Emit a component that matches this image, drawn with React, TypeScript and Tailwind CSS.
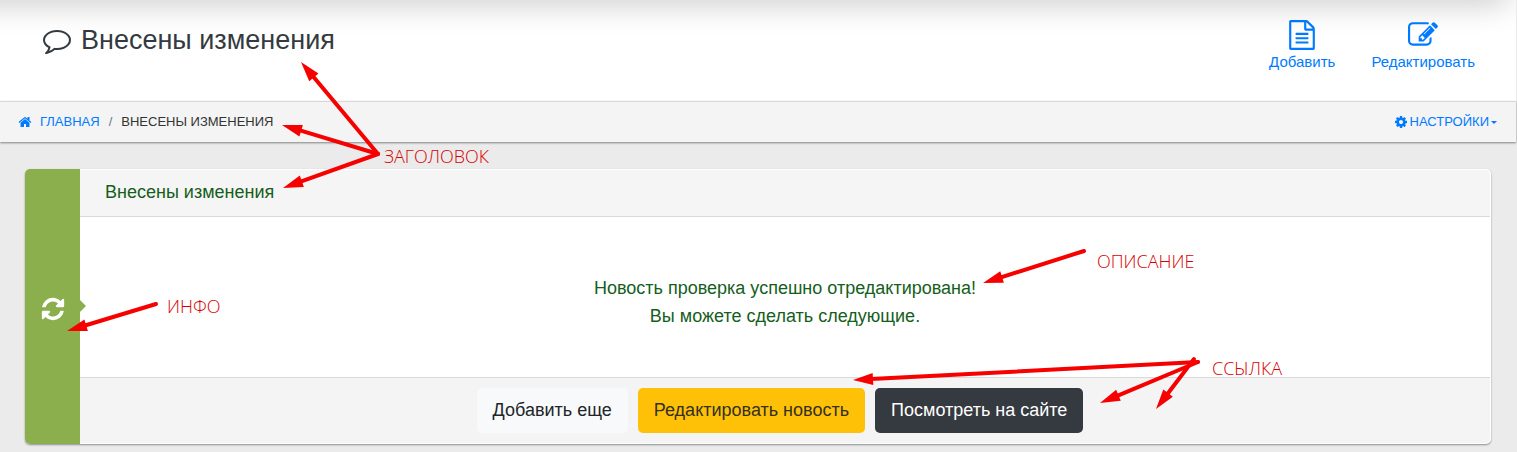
import type { ReactNode } from 'react';

const ICONS = {
  comment:
    'M896 384q-204 0-381.5 69.5t-282 187.5-104.5 255q0 112 71.5 213.5t201.5 175.5l87 50-27 96q-24 91-70 172 152-63 275-171l43-38 57 6q69 8 130 8 204 0 381.5-69.5t282-187.5 104.5-255-104.5-255-282-187.5-381.5-69.5zm896 512q0 174-120 321.5t-326 233-450 85.5q-70 0-145-8-198 175-460 242-49 14-114 22h-5q-15 0-27-10.5t-16-27.5v-1q-3-4-.5-12t2-10 4.5-9.5l6-9 7-8.5 8-9q7-8 31-34.5t34.5-38 31-39.5 32.5-51 27-59 26-76q-157-89-247.5-220t-90.5-281q0-130 71-248.5t191-204.5 286-136.5 348-50.5 348 50.5 286 136.5 191 204.5 71 248.5z',
  home: 'M1472 992v480q0 26-19 45t-45 19h-384v-384h-256v384h-384q-26 0-45-19t-19-45v-480q0-1 .5-3t.5-3l575-474 575 474q1 2 1 6zm223-69l-62 74q-8 9-21 11h-3q-13 0-21-7l-692-577-692 577q-12 8-24 7-13-2-21-11l-62-74q-8-10-7-23.5t11-21.5l719-599q32-26 76-26t76 26l244 204v-195q0-14 9-23t23-9h192q14 0 23 9t9 23v408l219 182q10 8 11 21.5t-7 23.5z',
  file: 'M1596 380q28 28 48 76t20 88v1152q0 40-28 68t-68 28h-1344q-40 0-68-28t-28-68v-1600q0-40 28-68t68-28h896q40 0 88 20t76 48zm-444-244v376h376q-10-29-22-41l-313-313q-12-12-41-22zm384 1528v-1024h-416q-40 0-68-28t-28-68v-416h-768v1536h1280zm-1024-864q0-14 9-23t23-9h704q14 0 23 9t9 23v64q0 14-9 23t-23 9h-704q-14 0-23-9t-9-23v-64zm736 224q14 0 23 9t9 23v64q0 14-9 23t-23 9h-704q-14 0-23-9t-9-23v-64q0-14 9-23t23-9h704zm0 256q14 0 23 9t9 23v64q0 14-9 23t-23 9h-704q-14 0-23-9t-9-23v-64q0-14 9-23t23-9h704z',
  edit: 'M888 1184l116-116-152-152-116 116v56h96v96h56zm440-720q-16-16-33 1l-350 350q-17 17-1 33t33-1l350-350q17-17 1-33zm80 594v190q0 119-84.5 203.5t-203.5 84.5h-832q-119 0-203.5-84.5t-84.5-203.5v-832q0-119 84.5-203.5t203.5-84.5h832q63 0 117 25 15 7 18 23 3 17-9 29l-49 49q-14 14-32 8-23-6-45-6h-832q-66 0-113 47t-47 113v832q0 66 47 113t113 47h832q66 0 113-47t47-113v-126q0-13 9-22l64-64q15-15 35-7t20 29zm-96-738l288 288-672 672h-288v-288zm444 132l-92 92-288-288 92-92q28-28 68-28t68 28l152 152q28 28 28 68t-28 68z',
  cog: 'M1152 896q0-106-75-181t-181-75-181 75-75 181 75 181 181 75 181-75 75-181zm512-109v222q0 12-8 23t-20 13l-185 28q-19 54-39 91 35 50 107 138 10 12 10 25t-9 23q-27 37-99 108t-94 71q-12 0-26-9l-138-108q-44 23-91 38-16 136-29 186-7 28-36 28h-222q-14 0-24.5-8.5t-11.5-21.5l-28-184q-49-16-90-37l-141 107q-10 9-25 9-14 0-25-11-126-114-165-168-7-10-7-23 0-12 8-23 15-21 51-66.5t54-70.5q-27-50-41-99l-183-27q-13-2-21-12.5t-8-23.5v-222q0-12 8-23t19-13l186-28q14-46 39-92-40-57-107-138-10-12-10-24 0-10 9-23 26-36 98.5-107.5t94.5-71.5q13 0 26 10l138 107q44-23 91-38 16-136 29-186 7-28 36-28h222q14 0 24.5 8.5t11.5 21.5l28 184q49 16 90 37l142-107q9-9 24-9 13 0 25 10 129 119 165 170 7 8 7 22 0 12-8 23-15 21-51 66.5t-54 70.5q26 50 41 98l183 28q13 2 21 12.5t8 23.5z',
  refresh:
    'M1639 1056q0 5-1 7-64 268-268 434.5t-478 166.5q-146 0-282.5-55t-243.5-157l-129 129q-19 19-45 19t-45-19-19-45v-448q0-26 19-45t45-19h448q26 0 45 19t19 45-19 45l-137 137q71 66 161 102t187 36q134 0 250-65t186-179q11-17 53-117 8-23 30-23h192q13 0 22.5 9.5t9.5 22.5zm25-800v448q0 26-19 45t-45 19h-448q-26 0-45-19t-19-45 19-45l138-138q-148-137-349-137-134 0-250 65t-186 179q-11 17-53 117-8 23-30 23h-199q-13 0-22.5-9.5t-9.5-22.5v-7q65-268 270-434.5t480-166.5q146 0 284 55.5t245 156.5l130-129q19-19 45-19t45 19 19 45z',
};

function Icon({ name, className }: { name: keyof typeof ICONS; className: string }) {
  return (
    <svg viewBox="0 0 1792 1792" fill="currentColor" aria-hidden="true" className={`shrink-0 ${className}`}>
      <path d={ICONS[name]} />
    </svg>
  );
}

function HeaderAction({ icon, children }: { icon: 'file' | 'edit'; children: ReactNode }) {
  return (
    <a href="#" className="flex flex-col items-center text-[15px] leading-6">
      <Icon name={icon} className="size-[30px]" />
      {children}
    </a>
  );
}

/* Arrow tails and tips, in page coordinates. */
const ARROWS: [number, number, number, number][] = [
  [378, 154, 301, 62],
  [378, 154, 282, 125],
  [378, 154, 283, 188],
  [156, 304, 67, 331],
  [1084, 251, 983, 283],
  [1198, 362, 853, 380],
  [1198, 362, 1100, 403],
  [1194, 359, 1156, 409],
];

function Arrow({ line: [x1, y1, x2, y2] }: { line: [number, number, number, number] }) {
  const length = Math.hypot(x2 - x1, y2 - y1);
  const angle = (Math.atan2(y2 - y1, x2 - x1) * 180) / Math.PI;
  return (
    <g transform={`translate(${x1} ${y1}) rotate(${angle})`}>
      <line x1="0" y1="0" x2={length - 18} y2="0" stroke="#f70000" strokeWidth="4" strokeLinecap="round" />
      <path d={`M${length} 0l-20 -6v12z`} fill="#f70000" />
    </g>
  );
}

function Notes() {
  return (
    <div className="pointer-events-none absolute inset-0 overflow-hidden font-['Open_Sans',sans-serif] text-[18px] leading-6 font-light text-[#d80000]">
      <svg width="1517" height="452" className="absolute top-0 left-0 max-w-none" aria-hidden="true">
        {ARROWS.map((line) => (
          <Arrow key={line.join()} line={line} />
        ))}
      </svg>
      <span className="absolute top-[144px] left-[384px]">ЗАГОЛОВОК</span>
      <span className="absolute top-[294px] left-[167px]">ИНФО</span>
      <span className="absolute top-[249px] left-[1097px]">ОПИСАНИЕ</span>
      <span className="absolute top-[356px] left-[1212px]">ССЫЛКА</span>
    </div>
  );
}

export default function App() {
  return (
    <div className="relative min-h-screen bg-[#ebebeb] pr-px pb-2 font-['Liberation_Sans',Arial,sans-serif] text-[#343a40]">
      <header className="relative flex items-start justify-between overflow-hidden bg-white pt-5 pr-[41px] pb-[27px] pl-[43px]">
        <div className="absolute -top-5 right-2 -left-10 h-5 shadow-[0_0_32px_rgba(0,0,0,0.3)]" />
        <h1 className="flex items-center gap-[10px] text-[27px] leading-10">
          <Icon name="comment" className="size-7" />
          Внесены изменения
        </h1>
        <div className="flex gap-9 text-[#007bff]">
          <HeaderAction icon="file">Добавить</HeaderAction>
          <HeaderAction icon="edit">Редактировать</HeaderAction>
        </div>
      </header>

      <nav className="relative flex h-[41px] items-center justify-between border-t border-[#d8d8d8] bg-[#f4f4f4] pr-[19px] pl-[18px] text-[13px] shadow-[0_1px_2px_rgba(0,0,0,0.45)]">
        <ol className="flex items-center">
          <li>
            <a href="#" className="flex items-center gap-2 text-[#007bff]">
              <Icon name="home" className="size-[14px]" />
              ГЛАВНАЯ
            </a>
          </li>
          <li className="px-[9px] text-[#6c757d]">/</li>
          <li className="text-[#333]">ВНЕСЕНЫ ИЗМЕНЕНИЯ</li>
        </ol>
        <button type="button" className="flex items-center gap-[2px] text-[#007bff]">
          <Icon name="cog" className="size-[14px]" />
          НАСТРОЙКИ
          <span className="border-x-[3px] border-t-[3px] border-x-transparent border-t-current" />
        </button>
      </nav>

      <main className="px-[25px] pt-[27px]">
        <section className="flex rounded-[5px] bg-white pr-px shadow-[0_1px_2px_rgba(0,0,0,0.4)]">
          <div className="relative flex w-[55px] shrink-0 items-center justify-center rounded-l-[5px] bg-[#8aaf4c] pt-1 text-white">
            <Icon name="refresh" className="size-[26px]" />
            <svg viewBox="0 0 6 12" className="absolute top-[131px] left-full h-3 w-[6px] text-[#8aaf4c]" aria-hidden="true">
              <path d="M0 0l6 6-6 6z" fill="currentColor" />
            </svg>
          </div>
          <div className="flex-1 py-px text-[18px] text-[#155e1c]">
            <h2 className="rounded-tr-[5px] border-b border-[#d9d9d9] bg-[#f5f5f5] px-[25px] pt-2 pb-[10px] leading-7">
              Внесены изменения
            </h2>
            <p className="px-5 pt-[57px] pb-[47px] text-center leading-7">
              Новость проверка успешно отредактирована!
              <br />
              Вы можете сделать следующие.
            </p>
            <div className="flex justify-center gap-[10px] rounded-br-[5px] border-t border-[#d9d9d9] bg-[#f4f4f4] pt-[10px] pr-[10px] pb-[10px] leading-[45px]">
              <a href="#" className="rounded-[5px] bg-[#f8f9fa] px-4 text-[#212529]">
                Добавить еще
              </a>
              <a href="#" className="rounded-[5px] bg-[#ffc107] px-4 text-[#33301f]">
                Редактировать новость
              </a>
              <a href="#" className="rounded-[5px] bg-[#343a40] px-4 text-white">
                Посмотреть на сайте
              </a>
            </div>
          </div>
        </section>
      </main>

      <Notes />
    </div>
  );
}
